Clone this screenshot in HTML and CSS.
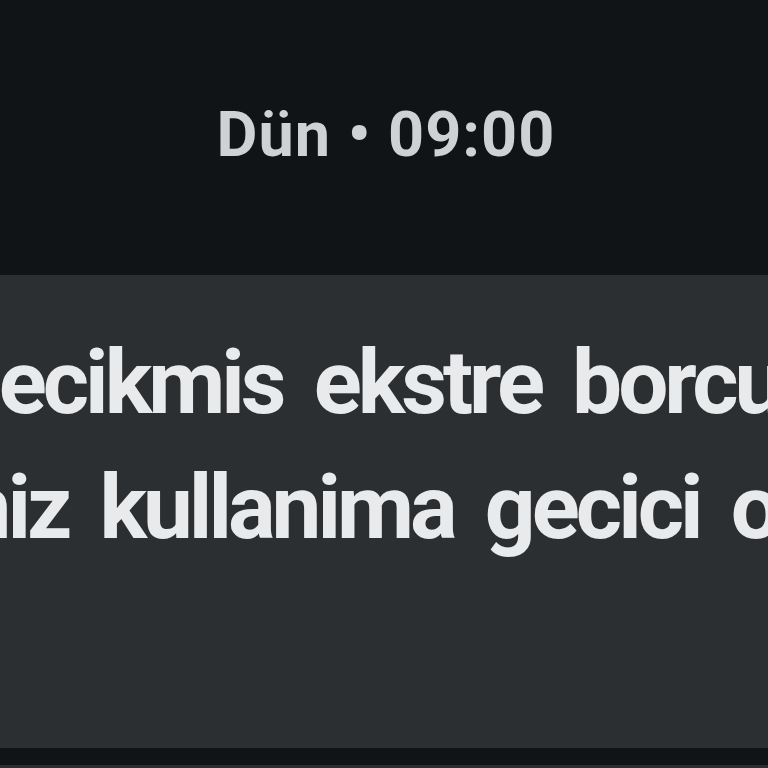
FILE: index.html
```html
<!DOCTYPE html>
<html lang="tr">
<head>
<meta charset="utf-8">
<link rel="stylesheet" href="styles.css">
</head>
<body>
<div class="screen">
  <div class="stamp">Dün • 09:00</div>
  <div class="bubble">
    <div class="line line1">Gecikmis ekstre borcunuz nedeniyle</div>
    <div class="line line2">kartiniz kullanima gecici olarak kapatilmistir.</div>
  </div>
  <div class="gap"></div>
  <div class="next"></div>
</div>
</body>
</html>
```
FILE: styles.css
```css
html, body {
  margin: 0;
  padding: 0;
  background: #111416;
}
.screen {
  width: 768px;
  height: 768px;
  overflow: hidden;
  display: flex;
  flex-direction: column;
  font-family: Roboto, "Liberation Sans", sans-serif;
}
.stamp {
  height: 275px;
  box-sizing: border-box;
  padding-top: 103px;
  text-align: center;
  font-size: 63px;
  line-height: 1;
  font-weight: 700;
  letter-spacing: 1px;
  color: #cfd2d5;
  padding-left: 4px;
}
.bubble {
  height: 473px;
  flex: none;
  box-sizing: border-box;
  padding-top: 45px;
  background: #2c2f32;
  overflow: hidden;
}
.line {
  white-space: nowrap;
  font-size: 89px;
  line-height: 125px;
  font-weight: 700;
  letter-spacing: -4px;
  word-spacing: 13px;
  color: #e9eaeb;
}
.line1 { margin-left: -58px; }
.line2 { margin-left: -202px; }
.gap {
  height: 17px;
  flex: none;
  background: #111416;
}
.next {
  flex: 1;
  background: #2c2f32;
}
```
